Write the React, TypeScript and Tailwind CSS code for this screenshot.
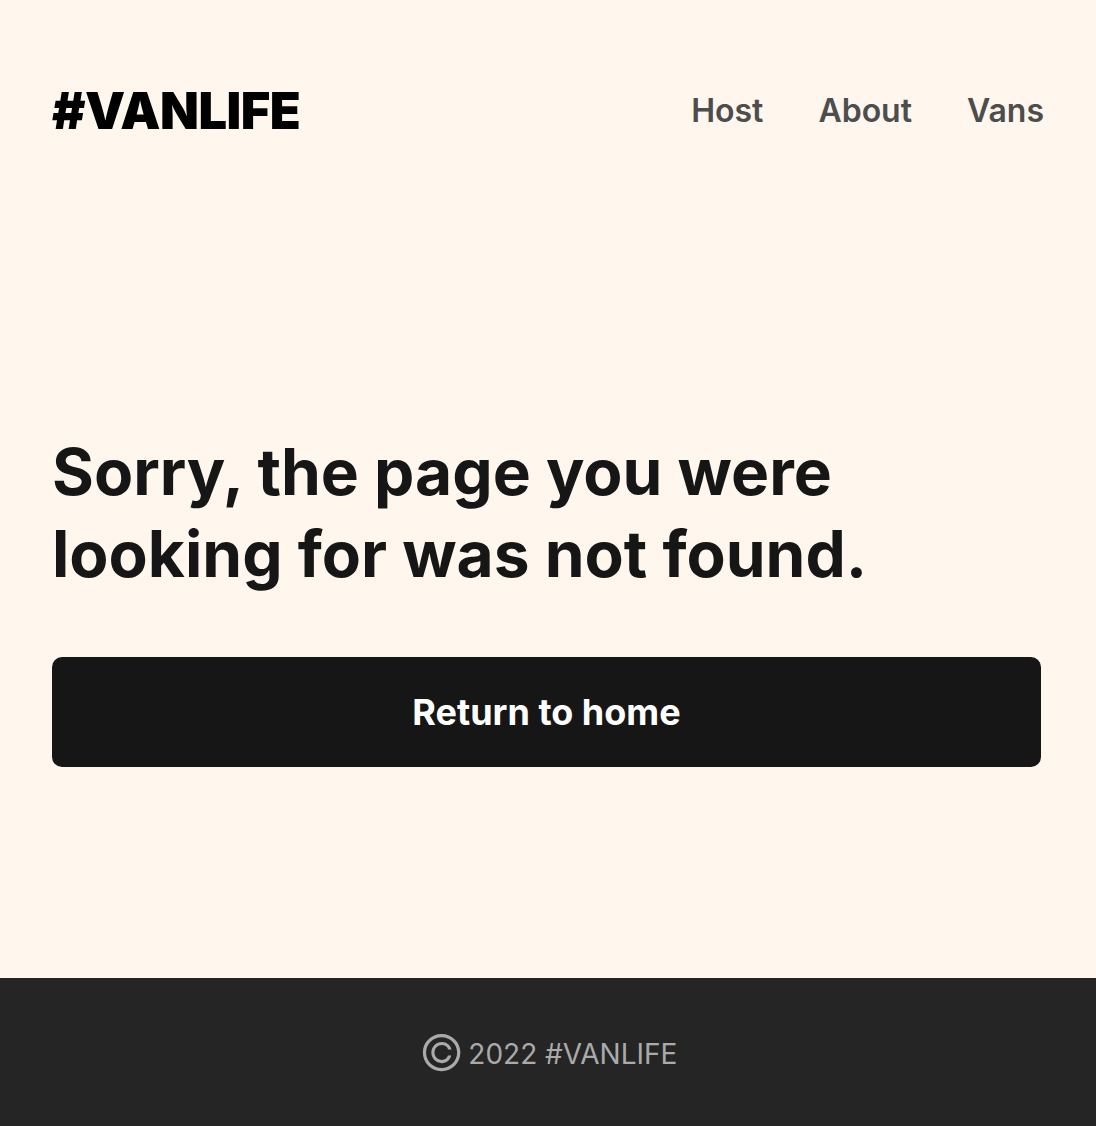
import React from "react";

const navLinks = ["Host", "About", "Vans"];

export default function App() {
  return (
    <div className="min-h-screen flex flex-col bg-[#fff7ed] text-[#161616] font-['Inter',sans-serif]">
      {/* Header */}
      <header className="h-[220px] pt-[2px] px-[52px] flex items-center justify-between">
        <a href="#" className="text-[50.6px] font-black tracking-[-0.01em] text-black leading-none">
          #VANLIFE
        </a>
        <nav className="flex items-center gap-[55px]">
          {navLinks.map((link) => (
            <a key={link} href="#" className="text-[32px] font-semibold text-[#4d4d4d] leading-none">
              {link}
            </a>
          ))}
        </nav>
      </header>

      {/* Not found content */}
      <main className="flex-1 flex flex-col justify-center px-[52px]">
        <h1 className="text-[64px] font-bold leading-[82px] mb-[62px]">
          Sorry, the page you were
          <br />
          looking for was not found.
        </h1>
        <a
          href="#"
          className="w-[989px] h-[110px] rounded-[10px] bg-[#161616] text-white text-[36px] font-bold flex items-center justify-center"
        >
          Return to home
        </a>
      </main>

      {/* Footer */}
      <footer className="h-[148px] pt-[3px] bg-[#252525] flex items-center justify-center text-[#aaaaaa] text-[28px] font-normal">
        <span className="text-[50px] font-light leading-none mr-[4px] relative top-[-1px]">©</span>
        2022 #VANLIFE
      </footer>
    </div>
  );
}
